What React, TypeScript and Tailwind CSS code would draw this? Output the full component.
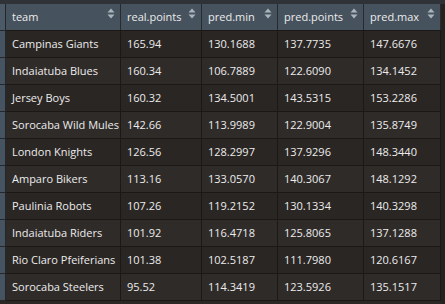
const rows = [
  ["Campinas Giants", "165.94", "130.1688", "137.7735", "147.6676"],
  ["Indaiatuba Blues", "160.34", "106.7889", "122.6090", "134.1452"],
  ["Jersey Boys", "160.32", "134.5001", "143.5315", "153.2286"],
  ["Sorocaba Wild Mules", "142.66", "113.9989", "122.9004", "135.8749"],
  ["London Knights", "126.56", "128.2997", "137.9296", "148.3440"],
  ["Amparo Bikers", "113.16", "133.0570", "140.3067", "148.1292"],
  ["Paulinia Robots", "107.26", "119.2152", "130.1334", "140.3298"],
  ["Indaiatuba Riders", "101.92", "116.4718", "125.8065", "137.1288"],
  ["Rio Claro Pfeiferians", "101.38", "102.5187", "111.7980", "120.6167"],
  ["Sorocaba Steelers", "95.52", "114.3419", "123.5926", "135.1517"],
];

const headers = ["team", "real.points", "pred.min", "pred.points", "pred.max"];
const widths = ["w-[115px]", "w-[81px]", "w-[76px]", "w-[86px]", "w-[77px]"];

function SortIcon() {
  return (
    <svg width="8" height="11" viewBox="0 0 8 11" className="shrink-0">
      <path d="M4 0.5 L7.5 4.5 H0.5 Z" fill="#aab4bd" />
      <path d="M4 10.5 L7.5 6.5 H0.5 Z" fill="#aab4bd" />
    </svg>
  );
}

export default function App() {
  return (
    <div
      className="w-[445px] h-[304px] overflow-hidden bg-[#2b2725] text-[11px] text-[#ececec]"
      style={{ fontFamily: '"Open Sans", "Noto Sans", sans-serif' }}
    >
      <div className="h-[4px] bg-[#2f3338]" />
      <div className="flex">
        <div className="w-[6px] shrink-0 flex flex-col">
          <div className="h-[26px] bg-[#4c5966] border-r border-[#23262a]" />
          {rows.map((_, i) => (
            <div key={i} className="h-[27px] bg-[#465462] border-t border-r border-[#23262a]" />
          ))}
        </div>
        <div className="flex flex-col">
          <div className="flex h-[26px] bg-[#46525d]">
            {headers.map((h, i) => (
              <div
                key={h}
                className={`${widths[i]} shrink-0 flex items-center justify-between pl-[6px] pr-[5px] border-r border-[#262b30]`}
              >
                <span className="whitespace-nowrap">{h}</span>
                <div className="-mt-[8px]">
                  <SortIcon />
                </div>
              </div>
            ))}
          </div>
          {rows.map((r, ri) => (
            <div
              key={ri}
              className={`flex h-[27px] border-t border-[#1b1816] ${ri % 2 === 0 ? "bg-[#2a2624]" : "bg-[#2f2b29]"}`}
            >
              {r.map((c, ci) => (
                <div
                  key={ci}
                  className={`${widths[ci]} shrink-0 flex items-center pl-[6px] whitespace-nowrap border-r border-[#1b1816]`}
                >
                  {c}
                </div>
              ))}
            </div>
          ))}
          <div className="h-[4px] border-t border-[#1b1816]" />
        </div>
        <div className="flex-1 bg-[#262220]" />
      </div>
    </div>
  );
}
